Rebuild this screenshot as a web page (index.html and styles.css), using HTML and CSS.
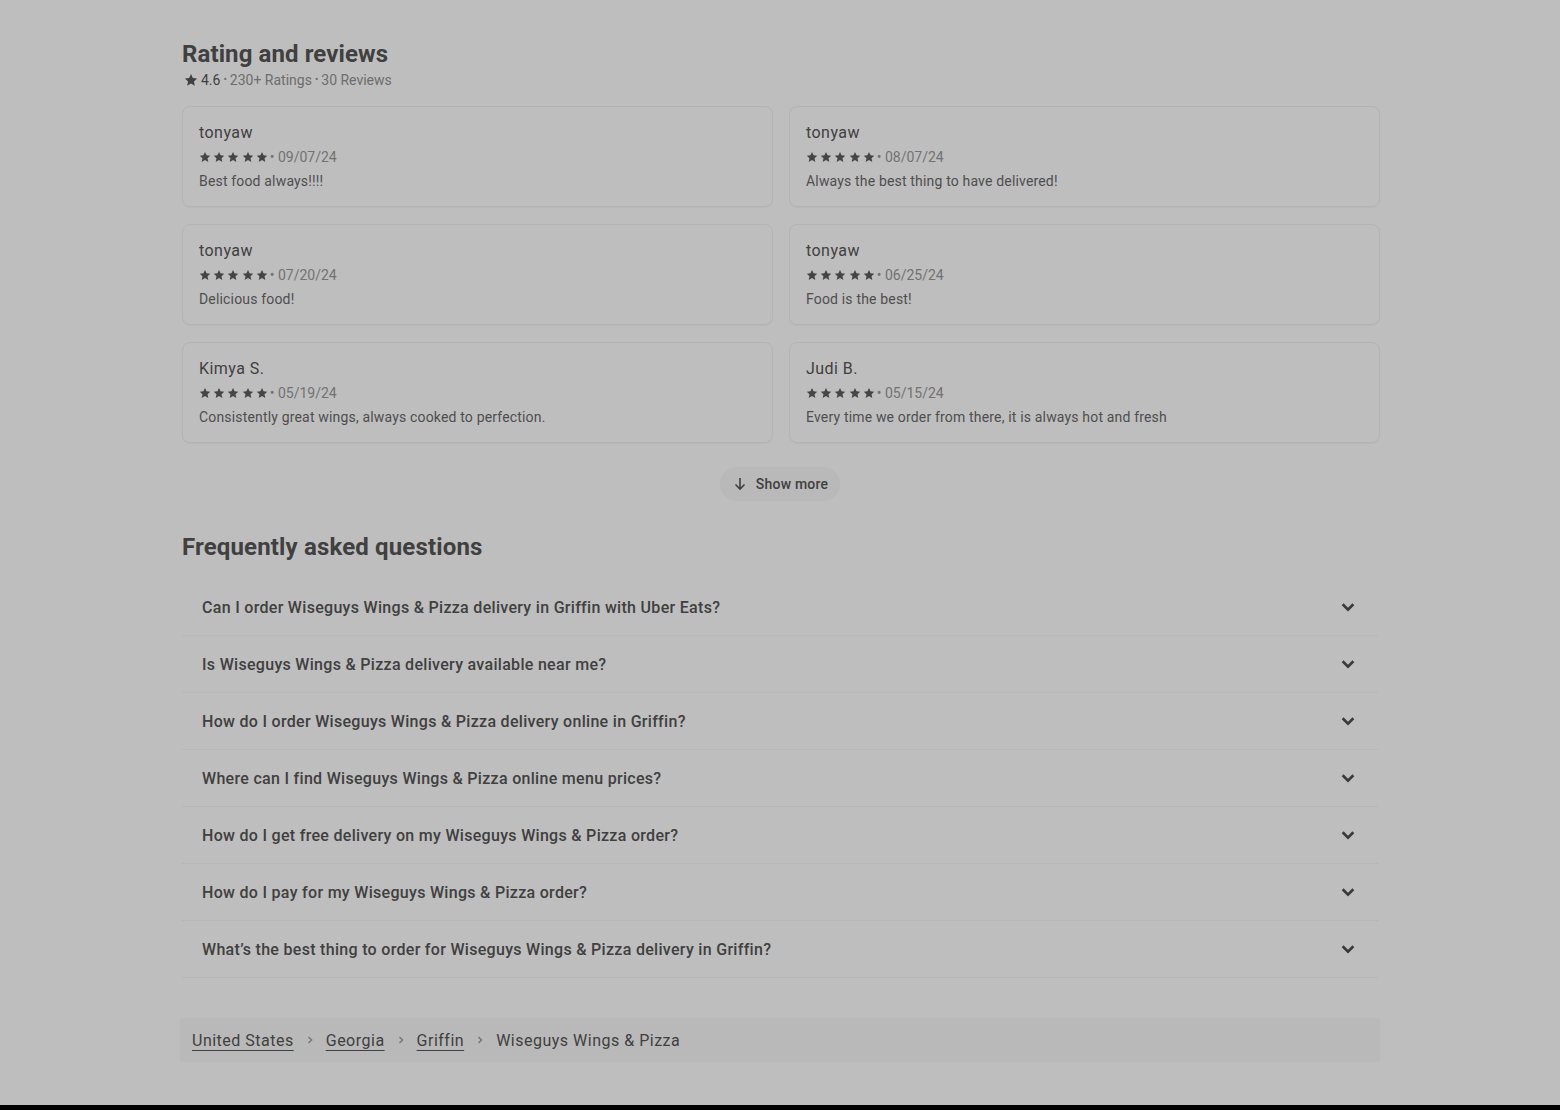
FILE: index.html
```html
<!DOCTYPE html>
<html lang="en">
<head>
<meta charset="utf-8">
<title>Wiseguys Wings &amp; Pizza</title>
<link rel="stylesheet" href="styles.css">
</head>
<body>
<svg width="0" height="0" class="defs" aria-hidden="true">
  <defs>
    <symbol id="star" viewBox="0 0 24 24"><path d="M12 1.8l3.1 6.8 7.4.8-5.5 5 1.6 7.4L12 18l-6.6 3.8 1.6-7.4-5.5-5 7.4-.8z"/></symbol>
    <symbol id="chev" viewBox="0 0 24 24"><path d="M12 18 3.6 9.6l2.5-2.5 5.9 5.9 5.9-5.9 2.5 2.5z"/></symbol>
  </defs>
</svg>
<main class="page">
  <section class="ratings">
    <h2 class="title">Rating and reviews</h2>
    <div class="summary">
      <svg class="sum-star"><use href="#star"/></svg>
      <span class="score">4.6</span>
      <span class="dot">•</span>
      <span>230+ Ratings</span>
      <span class="dot">•</span>
      <span>30 Reviews</span>
    </div>
    <div class="reviews">
      <div class="card">
        <div class="name">tonyaw</div>
        <div class="meta"><span class="stars"><svg><use href="#star"/></svg><svg><use href="#star"/></svg><svg><use href="#star"/></svg><svg><use href="#star"/></svg><svg><use href="#star"/></svg></span><span class="date">• 09/07/24</span></div>
        <div class="text">Best food always!!!!</div>
      </div>
      <div class="card">
        <div class="name">tonyaw</div>
        <div class="meta"><span class="stars"><svg><use href="#star"/></svg><svg><use href="#star"/></svg><svg><use href="#star"/></svg><svg><use href="#star"/></svg><svg><use href="#star"/></svg></span><span class="date">• 08/07/24</span></div>
        <div class="text">Always the best thing to have delivered!</div>
      </div>
      <div class="card">
        <div class="name">tonyaw</div>
        <div class="meta"><span class="stars"><svg><use href="#star"/></svg><svg><use href="#star"/></svg><svg><use href="#star"/></svg><svg><use href="#star"/></svg><svg><use href="#star"/></svg></span><span class="date">• 07/20/24</span></div>
        <div class="text">Delicious food!</div>
      </div>
      <div class="card">
        <div class="name">tonyaw</div>
        <div class="meta"><span class="stars"><svg><use href="#star"/></svg><svg><use href="#star"/></svg><svg><use href="#star"/></svg><svg><use href="#star"/></svg><svg><use href="#star"/></svg></span><span class="date">• 06/25/24</span></div>
        <div class="text">Food is the best!</div>
      </div>
      <div class="card">
        <div class="name">Kimya S.</div>
        <div class="meta"><span class="stars"><svg><use href="#star"/></svg><svg><use href="#star"/></svg><svg><use href="#star"/></svg><svg><use href="#star"/></svg><svg><use href="#star"/></svg></span><span class="date">• 05/19/24</span></div>
        <div class="text">Consistently great wings, always cooked to perfection.</div>
      </div>
      <div class="card">
        <div class="name">Judi B.</div>
        <div class="meta"><span class="stars"><svg><use href="#star"/></svg><svg><use href="#star"/></svg><svg><use href="#star"/></svg><svg><use href="#star"/></svg><svg><use href="#star"/></svg></span><span class="date">• 05/15/24</span></div>
        <div class="text">Every time we order from there, it is always hot and fresh</div>
      </div>
    </div>
    <div class="more-wrap">
      <button class="more" type="button">
        <svg class="arrow" viewBox="0 0 16 16"><path d="M8 2v11M3.5 8.5 8 13l4.5-4.5" fill="none" stroke="currentColor" stroke-width="1.6"/></svg>
        <span>Show more</span>
      </button>
    </div>
  </section>

  <section class="faq">
    <h2 class="title">Frequently asked questions</h2>
    <ul class="faq-list">
      <li class="faq-row"><span>Can I order Wiseguys Wings &amp; Pizza delivery in Griffin with Uber Eats?</span><svg class="chev"><use href="#chev"/></svg></li>
      <li class="faq-row"><span>Is Wiseguys Wings &amp; Pizza delivery available near me?</span><svg class="chev"><use href="#chev"/></svg></li>
      <li class="faq-row"><span>How do I order Wiseguys Wings &amp; Pizza delivery online in Griffin?</span><svg class="chev"><use href="#chev"/></svg></li>
      <li class="faq-row"><span>Where can I find Wiseguys Wings &amp; Pizza online menu prices?</span><svg class="chev"><use href="#chev"/></svg></li>
      <li class="faq-row"><span>How do I get free delivery on my Wiseguys Wings &amp; Pizza order?</span><svg class="chev"><use href="#chev"/></svg></li>
      <li class="faq-row"><span>How do I pay for my Wiseguys Wings &amp; Pizza order?</span><svg class="chev"><use href="#chev"/></svg></li>
      <li class="faq-row"><span>What’s the best thing to order for Wiseguys Wings &amp; Pizza delivery in Griffin?</span><svg class="chev"><use href="#chev"/></svg></li>
    </ul>
  </section>

  <nav class="crumbs">
    <a href="#">United States</a>
    <svg class="sep" viewBox="0 0 8 12"><path d="M2.5 3 5.5 6l-3 3" fill="none" stroke="currentColor" stroke-width="1.6"/></svg>
    <a href="#">Georgia</a>
    <svg class="sep" viewBox="0 0 8 12"><path d="M2.5 3 5.5 6l-3 3" fill="none" stroke="currentColor" stroke-width="1.6"/></svg>
    <a href="#">Griffin</a>
    <svg class="sep" viewBox="0 0 8 12"><path d="M2.5 3 5.5 6l-3 3" fill="none" stroke="currentColor" stroke-width="1.6"/></svg>
    <span class="current">Wiseguys Wings &amp; Pizza</span>
  </nav>
</main>
<footer class="footer"></footer>
</body>
</html>
```

FILE: styles.css
```css
* { box-sizing: border-box; }

html, body {
  margin: 0;
  background: #bebebe;
}

body {
  font-family: Roboto, "Liberation Sans", Arial, sans-serif;
  color: #404040;
}

.defs { position: absolute; width: 0; height: 0; overflow: hidden; }

.page {
  width: 1200px;
  margin: 0 auto;
  padding-top: 38px;
}

.title {
  margin: 0 0 0 2px;
  font-size: 24px;
  line-height: 32px;
  font-weight: 700;
  letter-spacing: 0.1px;
  color: #404040;
}

.faq .title { letter-spacing: 0.15px; }

.summary {
  display: flex;
  align-items: center;
  gap: 3px;
  margin-left: 2px;
  font-size: 14px;
  line-height: 20px;
  color: #6d6d6d;
}

.sum-star {
  width: 14px;
  height: 14px;
  fill: #404040;
  margin-left: 2px;
}

.score { color: #404040; }

.dot { font-size: 10px; }

.reviews {
  display: grid;
  grid-template-columns: 1fr 1fr;
  gap: 17px 16px;
  margin: 16px 0 0 2px;
}

.card {
  border: 1px solid #b3b3b3;
  border-radius: 8px;
  padding: 16px 16px 15px;
  box-shadow: 0 1px 0 #b8b8b8;
}

.name {
  font-size: 16px;
  line-height: 20px;
  letter-spacing: 0.45px;
  color: #404040;
}

.meta {
  display: flex;
  align-items: center;
  gap: 2px;
  margin-top: 4px;
  height: 20px;
  font-size: 14px;
  color: #727272;
}

.stars {
  display: flex;
  gap: 2.2px;
}

.stars svg {
  width: 12px;
  height: 12px;
  fill: #454545;
}

.text {
  margin-top: 4px;
  font-size: 14px;
  line-height: 20px;
  letter-spacing: 0.17px;
  color: #4e4e4e;
}

.more-wrap {
  display: flex;
  justify-content: center;
  margin-top: 24px;
}

.more {
  display: flex;
  align-items: center;
  gap: 8px;
  height: 34px;
  padding: 0 12px;
  border: 0;
  border-radius: 17px;
  background: #b9b9b9;
  font-family: inherit;
  font-size: 14px;
  font-weight: 500;
  letter-spacing: 0.2px;
  color: #404040;
}

.arrow {
  width: 16px;
  height: 16px;
  color: #404040;
}

.faq { margin-top: 30px; }

.faq-list {
  list-style: none;
  margin: 16px 0 0 2px;
  padding: 0;
  width: 1196px;
}

.faq-row {
  display: flex;
  align-items: center;
  justify-content: space-between;
  height: 57px;
  padding: 0 21px 0 20px;
  border-bottom: 1px solid #b7b7b7;
  font-size: 16px;
  font-weight: 500;
  letter-spacing: 0.3px;
  color: #404040;
}

.chev {
  width: 18px;
  height: 18px;
  fill: #3a3a3a;
}

.crumbs {
  display: flex;
  align-items: center;
  gap: 12px;
  height: 44px;
  margin-top: 40px;
  padding: 0 12px;
  background: #b9b9b9;
  border-radius: 2px;
  font-size: 16px;
  letter-spacing: 0.5px;
  color: #404040;
}

.crumbs a {
  color: #404040;
  text-decoration: underline;
  text-underline-offset: 4px;
}

.sep {
  width: 8px;
  height: 12px;
  color: #7a7a7a;
}

.footer {
  margin-top: 43px;
  height: 120px;
  background: #000;
}
```
